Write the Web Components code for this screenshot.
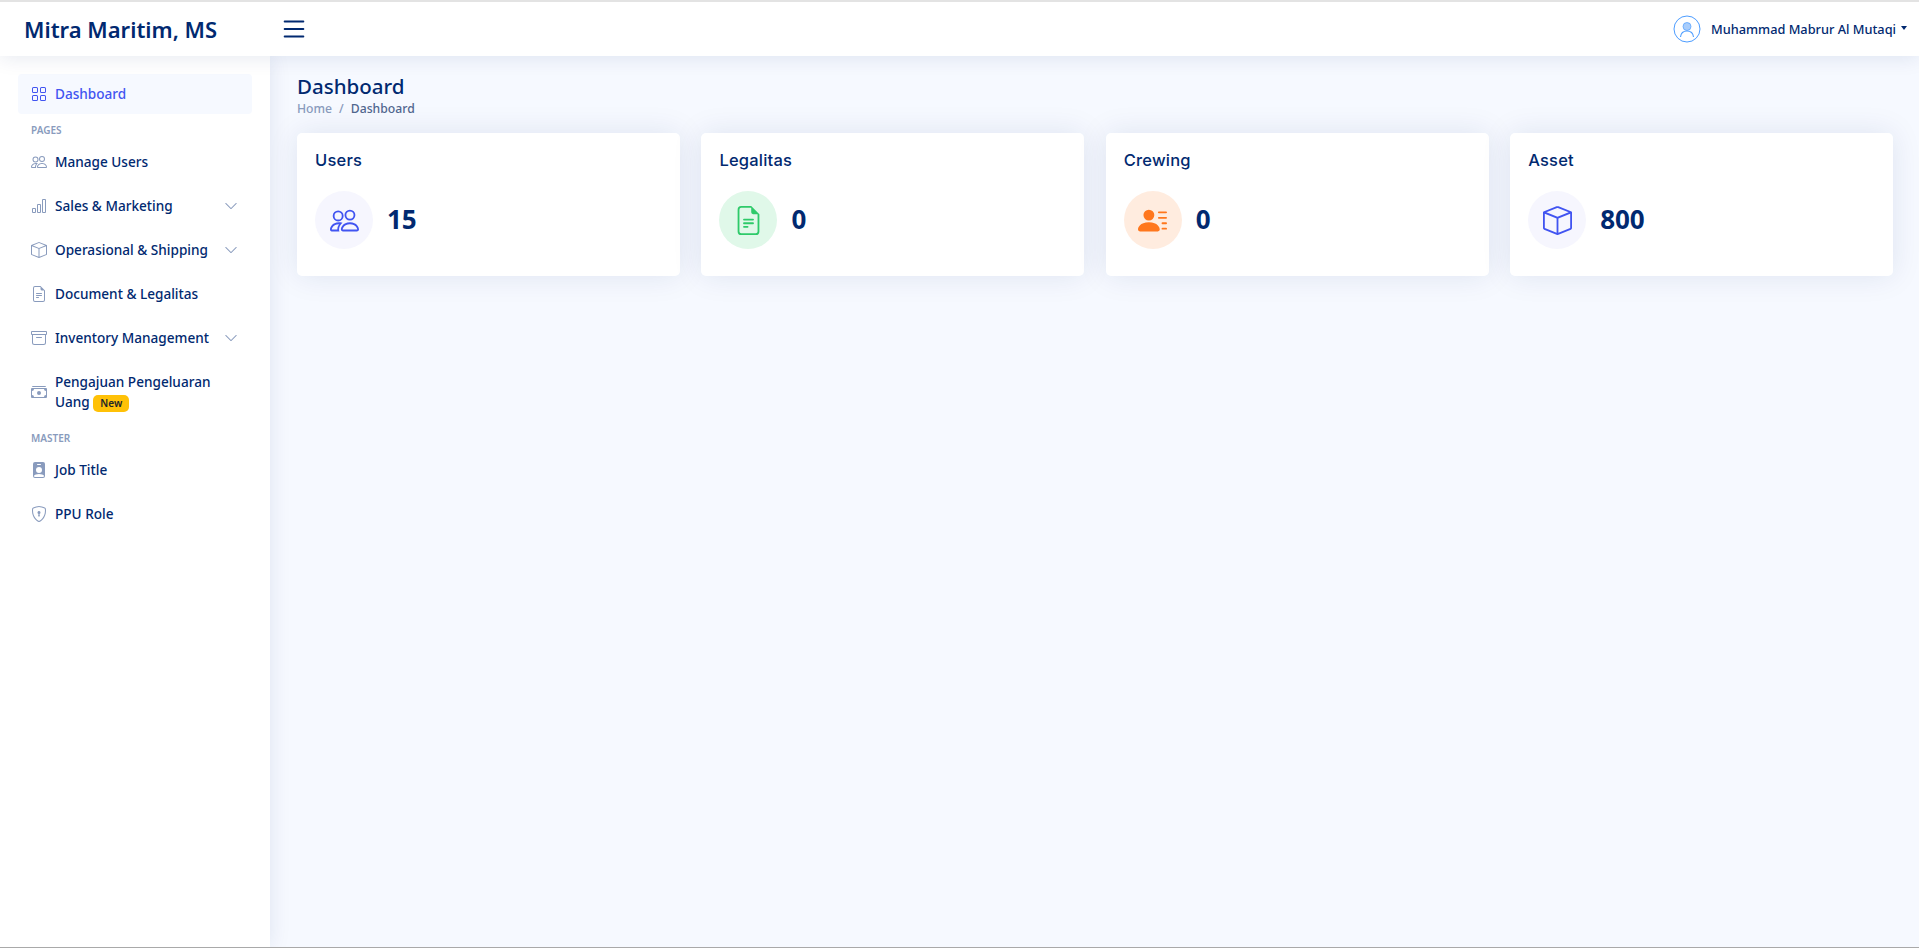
<!DOCTYPE html>
<html lang="en">
<head>
<meta charset="utf-8">
<title>Dashboard</title>
<style>
  html, body { margin: 0; height: 100%; }
  body { font-family: "Noto Sans", sans-serif; color: #012970; background: #f6f9ff; overflow: hidden; }
</style>
</head>
<body>
<app-shell>
  <app-header slot="header" brand="Mitra Maritim, MS" user="Muhammad Mabrur Al Mutaqi"></app-header>
  <app-sidebar slot="sidebar">
    <nav-item icon="grid" active>Dashboard</nav-item>
    <nav-heading>Pages</nav-heading>
    <nav-item icon="people">Manage Users</nav-item>
    <nav-item icon="bar-chart" chevron>Sales &amp; Marketing</nav-item>
    <nav-item icon="box" chevron>Operasional &amp; Shipping</nav-item>
    <nav-item icon="file-text">Document &amp; Legalitas</nav-item>
    <nav-item icon="archive" chevron>Inventory Management</nav-item>
    <nav-item icon="cash"><div>Pengajuan Pengeluaran</div><div>Uang <new-badge>New</new-badge></div></nav-item>
    <nav-heading>Master</nav-heading>
    <nav-item icon="badge">Job Title</nav-item>
    <nav-item icon="shield">PPU Role</nav-item>
  </app-sidebar>
  <page-title title="Dashboard" current="Dashboard"></page-title>
  <stat-grid>
    <stat-card label="Users" value="15" icon="people" tint="#f6f6fe" color="#4154f1"></stat-card>
    <stat-card label="Legalitas" value="0" icon="file-fill" tint="#e0f8e9" color="#2eca6a"></stat-card>
    <stat-card label="Crewing" value="0" icon="person-lines" tint="#ffecdf" color="#ff771d"></stat-card>
    <stat-card label="Asset" value="800" icon="box" tint="#f6f6fe" color="#4154f1"></stat-card>
  </stat-grid>
</app-shell>

<script>
(function () {

    const ICONS = {
        grid: 'M1 2.5A1.5 1.5 0 0 1 2.5 1h3A1.5 1.5 0 0 1 7 2.5v3A1.5 1.5 0 0 1 5.5 7h-3A1.5 1.5 0 0 1 1 5.5v-3zM2.5 2a.5.5 0 0 0-.5.5v3a.5.5 0 0 0 .5.5h3a.5.5 0 0 0 .5-.5v-3a.5.5 0 0 0-.5-.5h-3zm6.5.5A1.5 1.5 0 0 1 10.5 1h3A1.5 1.5 0 0 1 15 2.5v3A1.5 1.5 0 0 1 13.5 7h-3A1.5 1.5 0 0 1 9 5.5v-3zm1.5-.5a.5.5 0 0 0-.5.5v3a.5.5 0 0 0 .5.5h3a.5.5 0 0 0 .5-.5v-3a.5.5 0 0 0-.5-.5h-3zM1 10.5A1.5 1.5 0 0 1 2.5 9h3A1.5 1.5 0 0 1 7 10.5v3A1.5 1.5 0 0 1 5.5 15h-3A1.5 1.5 0 0 1 1 13.5v-3zm1.5-.5a.5.5 0 0 0-.5.5v3a.5.5 0 0 0 .5.5h3a.5.5 0 0 0 .5-.5v-3a.5.5 0 0 0-.5-.5h-3zm6.5.5A1.5 1.5 0 0 1 10.5 9h3a1.5 1.5 0 0 1 1.5 1.5v3a1.5 1.5 0 0 1-1.5 1.5h-3A1.5 1.5 0 0 1 9 13.5v-3zm1.5-.5a.5.5 0 0 0-.5.5v3a.5.5 0 0 0 .5.5h3a.5.5 0 0 0 .5-.5v-3a.5.5 0 0 0-.5-.5h-3z',
        people: 'M15 14s1 0 1-1-1-4-5-4-5 3-5 4 1 1 1 1h8zm-7.978-1A.261.261 0 0 1 7 12.996c.001-.264.167-1.03.76-1.72C8.312 10.629 9.282 10 11 10c1.717 0 2.687.63 3.24 1.276.593.69.758 1.457.76 1.72l-.008.002a.274.274 0 0 1-.014.002H7.022zM11 7a2 2 0 1 0 0-4 2 2 0 0 0 0 4zm3-2a3 3 0 1 1-6 0 3 3 0 0 1 6 0zM6.936 9.28a5.88 5.88 0 0 0-1.23-.247A7.35 7.35 0 0 0 5 9c-4 0-5 3-5 4 0 .667.333 1 1 1h4.216A2.238 2.238 0 0 1 5 13c0-1.01.377-2.042 1.09-2.904.243-.294.526-.569.846-.816zM4.92 10A5.493 5.493 0 0 0 4 13H1c0-.26.164-1.03.76-1.724.545-.636 1.492-1.256 3.16-1.275zM1.5 5.5a3 3 0 1 1 6 0 3 3 0 0 1-6 0zm3-2a2 2 0 1 0 0 4 2 2 0 0 0 0-4z',
        'bar-chart': 'M4 11H2v3h2v-3zm5-4H7v7h2V7zm5-5v12h-2V2h2zm-2-1a1 1 0 0 0-1 1v12a1 1 0 0 0 1 1h2a1 1 0 0 0 1-1V2a1 1 0 0 0-1-1h-2zM6 7a1 1 0 0 1 1-1h2a1 1 0 0 1 1 1v7a1 1 0 0 1-1 1H7a1 1 0 0 1-1-1V7zm-5 4a1 1 0 0 1 1-1h2a1 1 0 0 1 1 1v3a1 1 0 0 1-1 1H2a1 1 0 0 1-1-1v-3z',
        box: 'M8.186 1.113a.5.5 0 0 0-.372 0L1.846 3.5 8 5.961 14.154 3.5 8.186 1.113zM15 4.239l-6.5 2.6v7.922l6.5-2.6V4.24zM7.5 14.762V6.838L1 4.239v7.925l6.5 2.6zM7.443.184a1.5 1.5 0 0 1 1.114 0l7.129 2.852A.5.5 0 0 1 16 3.5v8.662a1 1 0 0 1-.629.928l-7.185 2.874a.5.5 0 0 1-.372 0L.63 13.09a1 1 0 0 1-.63-.928V3.5a.5.5 0 0 1 .314-.464L7.443.184z',
        'file-text': 'M5.5 7a.5.5 0 0 0 0 1h5a.5.5 0 0 0 0-1h-5zM5 9.5a.5.5 0 0 1 .5-.5h5a.5.5 0 0 1 0 1h-5a.5.5 0 0 1-.5-.5zm0 2a.5.5 0 0 1 .5-.5h2a.5.5 0 0 1 0 1h-2a.5.5 0 0 1-.5-.5zM9.5 0H4a2 2 0 0 0-2 2v12a2 2 0 0 0 2 2h8a2 2 0 0 0 2-2V4.5L9.5 0zm0 1v2A1.5 1.5 0 0 0 11 4.5h2V14a1 1 0 0 1-1 1H4a1 1 0 0 1-1-1V2a1 1 0 0 1 1-1h5.5z',
        'file-fill': 'M5.5 7a.5.5 0 0 0 0 1h5a.5.5 0 0 0 0-1h-5zM5 9.5a.5.5 0 0 1 .5-.5h5a.5.5 0 0 1 0 1h-5a.5.5 0 0 1-.5-.5zm0 2a.5.5 0 0 1 .5-.5h2a.5.5 0 0 1 0 1h-2a.5.5 0 0 1-.5-.5zM9.5 0H4a2 2 0 0 0-2 2v12a2 2 0 0 0 2 2h8a2 2 0 0 0 2-2V4.5L9.5 0zm0 1v2.5a1 1 0 0 0 1 1H13V14a1 1 0 0 1-1 1H4a1 1 0 0 1-1-1V2a1 1 0 0 1 1-1h5.5z',
        archive: 'M0 2a1 1 0 0 1 1-1h14a1 1 0 0 1 1 1v2a1 1 0 0 1-1 1v7.5a2.5 2.5 0 0 1-2.5 2.5h-9A2.5 2.5 0 0 1 1 12.5V5a1 1 0 0 1-1-1V2zm2 3v7.5A1.5 1.5 0 0 0 3.5 14h9a1.5 1.5 0 0 0 1.5-1.5V5H2zm13-3H1v2h14V2zM5 7.5a.5.5 0 0 1 .5-.5h5a.5.5 0 0 1 0 1h-5a.5.5 0 0 1-.5-.5z',
        cash: 'M1 3a1 1 0 0 1 1-1h12a1 1 0 0 1 1 1H1zm7 8a2 2 0 1 0 0-4 2 2 0 0 0 0 4zM0 5a1 1 0 0 1 1-1h14a1 1 0 0 1 1 1v8a1 1 0 0 1-1 1H1a1 1 0 0 1-1-1V5zm3 0a2 2 0 0 1-2 2v4a2 2 0 0 1 2 2h10a2 2 0 0 1 2-2V7a2 2 0 0 1-2-2H3z',
        badge: 'M2 2a2 2 0 0 1 2-2h8a2 2 0 0 1 2 2v12a2 2 0 0 1-2 2H4a2 2 0 0 1-2-2V2zm4.5 0a.5.5 0 0 0 0 1h3a.5.5 0 0 0 0-1h-3zM8 11a3 3 0 1 0 0-6 3 3 0 0 0 0 6zm5 2.755C12.146 12.825 10.623 12 8 12s-4.146.826-5 1.755V14a1 1 0 0 0 1 1h8a1 1 0 0 0 1-1v-.245z',
        shield: 'M5.338 1.59a61.44 61.44 0 0 0-2.837.856.481.481 0 0 0-.328.39c-.554 4.157.726 7.19 2.253 9.188a10.725 10.725 0 0 0 2.287 2.233c.346.244.652.42.893.533.12.057.218.095.293.118a.55.55 0 0 0 .101.025.615.615 0 0 0 .1-.025c.076-.023.174-.061.294-.118.24-.113.547-.29.893-.533a10.726 10.726 0 0 0 2.287-2.233c1.527-1.997 2.807-5.031 2.253-9.188a.48.48 0 0 0-.328-.39c-.651-.213-1.75-.56-2.837-.855C9.552 1.29 8.531 1.067 8 1.067c-.53 0-1.552.223-2.662.524zM5.072.56C6.157.265 7.31 0 8 0s1.843.265 2.928.56c1.11.3 2.229.655 2.887.87a1.54 1.54 0 0 1 1.044 1.262c.596 4.477-.787 7.795-2.465 9.99a11.775 11.775 0 0 1-2.517 2.453 7.159 7.159 0 0 1-1.048.625c-.28.132-.581.24-.829.24s-.548-.108-.829-.24a7.158 7.158 0 0 1-1.048-.625 11.777 11.777 0 0 1-2.517-2.453C1.928 10.487.545 7.169 1.141 2.692A1.54 1.54 0 0 1 2.185 1.43 62.456 62.456 0 0 1 5.072.56zM9.5 6.5a1.5 1.5 0 0 1-1 1.415l.385 1.99a.5.5 0 0 1-.491.595h-.788a.5.5 0 0 1-.49-.595l.384-1.99a1.5 1.5 0 1 1 2-1.415z',
        'person-lines': 'M6 8a3 3 0 1 0 0-6 3 3 0 0 0 0 6zm-5 6s-1 0-1-1 1-4 6-4 6 3 6 4-1 1-1 1H1zM11 3.5a.5.5 0 0 1 .5-.5h4a.5.5 0 0 1 0 1h-4a.5.5 0 0 1-.5-.5zm.5 2.5a.5.5 0 0 0 0 1h4a.5.5 0 0 0 0-1h-4zm2 3a.5.5 0 0 0 0 1h2a.5.5 0 0 0 0-1h-2zm0 3a.5.5 0 0 0 0 1h2a.5.5 0 0 0 0-1h-2z',
        chevron: 'M1.646 4.646a.5.5 0 0 1 .708 0L8 10.293l5.646-5.647a.5.5 0 0 1 .708.708l-6 6a.5.5 0 0 1-.708 0l-6-6a.5.5 0 0 1 0-.708z',
        list: 'M2.5 12a.5.5 0 0 1 .5-.5h10a.5.5 0 0 1 0 1H3a.5.5 0 0 1-.5-.5zm0-4a.5.5 0 0 1 .5-.5h10a.5.5 0 0 1 0 1H3a.5.5 0 0 1-.5-.5zm0-4a.5.5 0 0 1 .5-.5h10a.5.5 0 0 1 0 1H3a.5.5 0 0 1-.5-.5z'
    };

    function icon(name) {
        return `<svg viewBox="0 0 16 16" width="1em" height="1em" fill="currentColor"><path fill-rule="evenodd" d="${ICONS[name]}"/></svg>`;
    }

    class AppShell extends HTMLElement {
        constructor() {
            super();
            this.attachShadow({ mode: 'open' }).innerHTML = `
            <style>
                :host { display: flex; flex-direction: column; height: 948px; box-sizing: border-box;
                        border-top: 2px solid #e3e3e3; border-bottom: 1px solid #a9a9a9; background: #f6f9ff; overflow: hidden; }
                .body { flex: 1; display: flex; min-height: 0; }
                main { flex: 1; min-width: 0; padding: 16px 26px 0 27px; }
            </style>
            <slot name="header"></slot>
            <div class="body">
                <slot name="sidebar"></slot>
                <main><slot></slot></main>
            </div>`;
        }
    }

    class AppHeader extends HTMLElement {
        constructor() {
            super();
            this.attachShadow({ mode: 'open' });
        }
        connectedCallback() {
            this.shadowRoot.innerHTML = `
            <style>
                :host { display: flex; align-items: center; height: 54px; background: #fff; position: relative; z-index: 2;
                        box-shadow: 0 2px 20px rgba(1, 41, 112, .1); padding: 0 12px 0 24px; flex: none; }
                .brand { width: 250px; font: 600 22px "Noto Sans", sans-serif; color: #012970; }
                .toggle { font-size: 30px; line-height: 0; margin-left: 5px; color: #012970; }
                .user { margin-left: auto; display: flex; align-items: center; font: 500 12.75px "Noto Sans", sans-serif; color: #012970; }
                .user svg { margin-right: 10px; display: block; }
                .caret { width: 0; height: 0; margin-left: 5px; border-top: 4px solid #012970; border-left: 3.5px solid transparent; border-right: 3.5px solid transparent; margin-bottom: 2px; }
            </style>
            <div class="brand">${this.getAttribute('brand')}</div>
            <div class="toggle">${icon('list')}</div>
            <div class="user">
                <svg width="28" height="28" viewBox="0 0 28 28" fill="none">
                    <circle cx="14" cy="14" r="13" stroke="#4d9dff"/>
                    <circle cx="14" cy="11.5" r="4" fill="#a9cdfb" stroke="#4d9dff" stroke-width=".7"/>
                    <path d="M7.5 22c.5-4.5 3-6 6.5-6s6 1.5 6.5 6" stroke="#4d9dff" stroke-width="1.1"/>
                </svg>
                <span>${this.getAttribute('user')}</span><span class="caret"></span>
            </div>`;
        }
    }

    class AppSidebar extends HTMLElement {
        constructor() {
            super();
            this.attachShadow({ mode: 'open' }).innerHTML = `
            <style>
                :host { display: flex; flex-direction: column; gap: 4px; width: 270px; flex: none; box-sizing: border-box;
                        padding: 18px 18px 0; background: #fff; box-shadow: 0 0 20px rgba(1, 41, 112, .1); position: relative; z-index: 1; }
            </style>
            <slot></slot>`;
        }
    }

    class NavItem extends HTMLElement {
        constructor() {
            super();
            this.attachShadow({ mode: 'open' });
        }
        connectedCallback() {
            const chevron = this.hasAttribute('chevron') ? `<span class="chevron">${icon('chevron')}</span>` : '';
            this.shadowRoot.innerHTML = `
            <style>
                :host { display: flex; align-items: center; padding: 10px 14px 10px 13px; min-height: 20px; border-radius: 4px;
                        font: 500 13.6px/20px "Noto Sans", sans-serif; color: #012970; }
                :host([active]) { background: #f6f9ff; color: #4154f1; }
                .icon { font-size: 16px; line-height: 0; margin-right: 8px; color: #899bbd; }
                :host([active]) .icon { color: #4154f1; }
                .label { flex: 1; min-width: 0; }
                .chevron { font-size: 14px; line-height: 0; color: #899bbd; }
            </style>
            <span class="icon">${icon(this.getAttribute('icon'))}</span>
            <span class="label"><slot></slot></span>
            ${chevron}`;
        }
    }

    class NavHeading extends HTMLElement {
        constructor() {
            super();
            this.attachShadow({ mode: 'open' }).innerHTML = `
            <style>
                :host { display: block; margin: 4px 0 0 13px; font: 600 10px/16px "Noto Sans", sans-serif; text-transform: uppercase; color: #899bbd; }
            </style>
            <slot></slot>`;
        }
    }

    class NewBadge extends HTMLElement {
        constructor() {
            super();
            this.attachShadow({ mode: 'open' }).innerHTML = `
            <style>
                :host { display: inline-block; padding: 0 7px; background: #ffc107; border-radius: 5px; vertical-align: 0;
                        font: 600 10px/17px "Noto Sans", sans-serif; color: #212529; }
            </style>
            <slot></slot>`;
        }
    }

    class PageTitle extends HTMLElement {
        constructor() {
            super();
            this.attachShadow({ mode: 'open' });
        }
        connectedCallback() {
            this.shadowRoot.innerHTML = `
            <style>
                :host { display: block; margin-bottom: 15px; }
                h1 { margin: 0; font: 500 20.5px/28px "Noto Sans", sans-serif; color: #012970; }
                nav { font: 500 12.2px/18px "Noto Sans", sans-serif; color: #899bbd; display: flex; gap: 7px; }
                .current { color: #51678f; }
            </style>
            <h1>${this.getAttribute('title')}</h1>
            <nav><span>Home</span><span>/</span><span class="current">${this.getAttribute('current')}</span></nav>`;
        }
    }

    class StatGrid extends HTMLElement {
        constructor() {
            super();
            this.attachShadow({ mode: 'open' }).innerHTML = `
            <style>
                :host { display: grid; grid-template-columns: repeat(4, 1fr); gap: 21.5px; }
            </style>
            <slot></slot>`;
        }
    }

    class StatCard extends HTMLElement {
        constructor() {
            super();
            this.attachShadow({ mode: 'open' });
        }
        connectedCallback() {
            const tint = this.getAttribute('tint');
            const color = this.getAttribute('color');
            this.shadowRoot.innerHTML = `
            <style>
                :host { display: block; height: 143px; box-sizing: border-box; padding: 16px 18px; background: #fff; border-radius: 5px;
                        box-shadow: 0 0 30px rgba(1, 41, 112, .1); }
                .label { font: 500 16.5px/22px Inter, sans-serif; letter-spacing: .2px; color: #012970; }
                .row { display: flex; align-items: center; gap: 14px; margin-top: 20px; }
                .circle { width: 58px; height: 58px; border-radius: 50%; display: flex; align-items: center; justify-content: center;
                          background: ${tint}; color: ${color}; font-size: 29px; line-height: 0; }
                .value { font: 700 26px/32px "Noto Sans", sans-serif; color: #012970; margin-top: -2px; }
            </style>
            <div class="label">${this.getAttribute('label')}</div>
            <div class="row">
                <div class="circle">${icon(this.getAttribute('icon'))}</div>
                <div class="value">${this.getAttribute('value')}</div>
            </div>`;
        }
    }

    customElements.define('app-shell', AppShell);
    customElements.define('app-header', AppHeader);
    customElements.define('app-sidebar', AppSidebar);
    customElements.define('nav-item', NavItem);
    customElements.define('nav-heading', NavHeading);
    customElements.define('new-badge', NewBadge);
    customElements.define('page-title', PageTitle);
    customElements.define('stat-grid', StatGrid);
    customElements.define('stat-card', StatCard);
})();
</script>
</body>
</html>
